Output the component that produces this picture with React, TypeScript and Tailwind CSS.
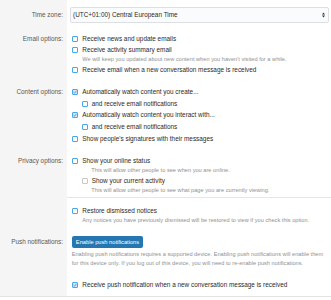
import type { ReactNode } from "react";

function Box({ checked = false, disabled = false }: { checked?: boolean; disabled?: boolean }) {
    const tone = disabled
        ? "border-[#c8c8c8] bg-white"
        : checked
        ? "border-[#47a7eb] bg-[#d3e6f6]"
        : "border-[#47a7eb] bg-white";
    return (
        <span className={`w-[6px] h-[6px] shrink-0 rounded-[1px] border flex items-center justify-center ${tone}`}>
            {checked && (
                <svg width="4" height="4" viewBox="0 0 8 8">
                    <path d="M1 4.2 L3.2 6.3 L7 1.8" fill="none" stroke="#3d8fd0" strokeWidth="1.6" />
                </svg>
            )}
        </span>
    );
}

function Check({ children, checked, disabled, nested }: { children: ReactNode; checked?: boolean; disabled?: boolean; nested?: boolean }) {
    return (
        <div className={`flex items-center gap-[4px] h-[10px] leading-[10px] whitespace-nowrap ${nested ? "pl-[9.4px]" : ""}`}>
            <Box checked={checked} disabled={disabled} />
            <span>{children}</span>
        </div>
    );
}

function Hint({ children, indent }: { children: ReactNode; indent?: boolean }) {
    return (
        <div className={`text-[5.6px] tracking-[0.03px] leading-[8px] text-[#8f8f8f] whitespace-nowrap ${indent ? "pl-[19px]" : "pl-[10px]"}`}>
            {children}
        </div>
    );
}

function Label({ children, className = "" }: { children: ReactNode; className?: string }) {
    return (
        <div className={`w-[67px] shrink-0 bg-[#f5f5f5] text-right pr-[4px] text-[#595959] whitespace-nowrap ${className}`}>
            {children}
        </div>
    );
}

export default function App() {
    return (
        <div className="w-[331px] bg-white text-[#2a2a2a] text-[6.4px] font-['Liberation_Sans',Arial,sans-serif]">
            <div className="border-b border-[#e2e2e2]">
                {/* Time zone */}
                <div className="flex">
                    <Label className="pt-[6.5px] leading-[16px]">Time zone:</Label>
                    <div className="flex-1 pt-[6.5px] pl-[3px] pr-[2px]">
                        <div className="h-[16px] flex items-center justify-between rounded-[2px] border border-[#dcdfe3] bg-[#fafbfc] pl-[2px] pr-[3px]">
                            <span>(UTC+01:00) Central European Time</span>
                            <svg width="3" height="6" viewBox="0 0 3 6">
                                <path d="M0 2.4 L1.5 0.4 L3 2.4 Z M0 3.6 L1.5 5.6 L3 3.6 Z" fill="#333" />
                            </svg>
                        </div>
                    </div>
                </div>

                {/* Email options */}
                <div className="flex">
                    <Label className="pt-[11.2px] leading-[10px]">Email options:</Label>
                    <div className="flex-1 pt-[11.2px] pl-[5.3px] flex flex-col gap-[1.5px]">
                        <Check>Receive news and update emails</Check>
                        <div>
                            <Check>Receive activity summary email</Check>
                            <Hint>We will keep you updated about new content when you haven't visited for a while.</Hint>
                        </div>
                        <Check>Receive email when a new conversation message is received</Check>
                    </div>
                </div>

                {/* Content options */}
                <div className="flex">
                    <Label className="pt-[12.6px] leading-[10px]">Content options:</Label>
                    <div className="flex-1 pt-[12.6px] pl-[5.3px] flex flex-col gap-[1.6px]">
                        <Check checked>Automatically watch content you create...</Check>
                        <Check nested>and receive email notifications</Check>
                        <Check checked>Automatically watch content you interact with...</Check>
                        <Check nested>and receive email notifications</Check>
                        <Check>Show people's signatures with their messages</Check>
                    </div>
                </div>

                {/* Privacy options */}
                <div className="flex">
                    <Label className="pt-[12.3px] leading-[10px]">Privacy options:</Label>
                    <div className="flex-1 pt-[12.3px] pb-[3.3px] pl-[5.3px] border-b border-[#e6e6e6]">
                        <Check>Show your online status</Check>
                        <Hint indent>This will allow other people to see when you are online.</Hint>
                        <div className="mt-[2px]">
                            <Check nested disabled>Show your current activity</Check>
                            <Hint indent>This will allow other people to see what page you are currently viewing.</Hint>
                        </div>
                    </div>
                </div>

                {/* Restore notices */}
                <div className="flex">
                    <Label> </Label>
                    <div className="flex-1 pt-[7.7px] pl-[5.3px]">
                        <Check>Restore dismissed notices</Check>
                        <Hint>Any notices you have previously dismissed will be restored to view if you check this option.</Hint>
                    </div>
                </div>

                {/* Push notifications */}
                <div className="flex">
                    <Label className="pt-[11.7px] leading-[12.6px]">Push notifications:</Label>
                    <div className="flex-1 pt-[11.7px] pb-[6px] pl-[4.7px]">
                        <button className="h-[12.6px] w-[71.6px] rounded-[2px] bg-[#2577b1] text-white text-[5.7px] leading-[12.6px] text-center">
                            Enable push notifications
                        </button>
                        <div className="mt-[2.2px] text-[5.6px] tracking-[0.03px] leading-[8.3px] text-[#8f8f8f] whitespace-nowrap">
                            Enabling push notifications requires a supported device. Enabling push notifications will enable them
                            <br />
                            for this device only. If you log out of this device, you will need to re-enable push notifications.
                        </div>
                        <div className="mt-[12.9px] pl-[0.6px]">
                            <Check checked>Receive push notification when a new conversation message is received</Check>
                        </div>
                    </div>
                </div>
            </div>
            <div className="h-[3px]" />
        </div>
    );
}
